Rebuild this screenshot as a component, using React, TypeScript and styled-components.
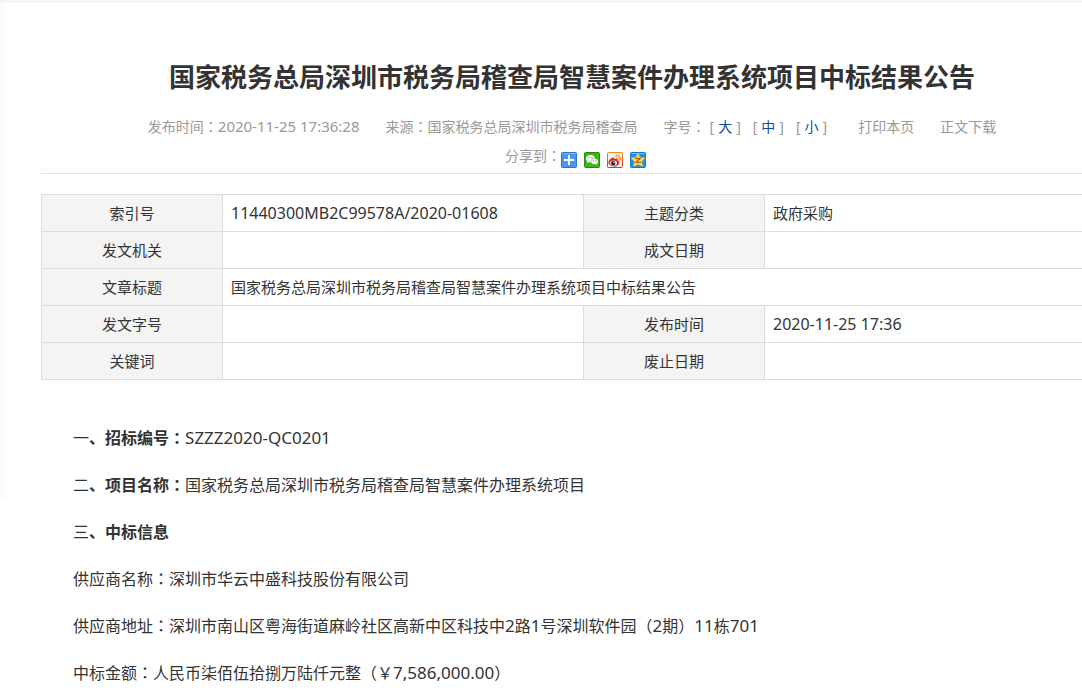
import React from "react";
import styled, { createGlobalStyle } from "styled-components";

const GlobalStyle = createGlobalStyle`
  * { box-sizing: border-box; }
  body {
    margin: 0;
    background: #fff;
    color: #333;
    font-family: "Noto Sans", "Noto Sans CJK SC", sans-serif;
    overflow-x: hidden;
  }
`;

const Page = styled.div`
  min-height: 100vh;
  overflow: hidden;
  border-top: 3px solid #f5f5f5;
  background: linear-gradient(to right, #f9f9f9, #fff) no-repeat left top / 7px 496px;
`;

const Main = styled.main`
  margin: 0 -21px 0 41px;
  padding-top: 54px;
`;

const Title = styled.h1`
  margin: 0;
  color: #333;
  font-size: 26px;
  line-height: 40px;
  font-weight: 700;
  text-align: center;
  white-space: nowrap;
`;

const Header = styled.header`
  border-bottom: 1px solid #e2e2e2;
  color: #999;
  font-size: 14px;
`;

const MetaRow = styled.div`
  display: flex;
  justify-content: center;
  gap: 26px;
  margin-top: 16px;
  line-height: 28px;
  white-space: nowrap;
`;

const SizeGroup = styled.span`
  display: flex;
  gap: 12px;
  margin-right: 5px;
`;

const SizeLabel = styled.span`
  margin-right: -8px;
`;

const SizeOption = styled.span`
  display: flex;
  gap: 4px;
`;

const PlainButton = styled.button<{ $accent?: boolean }>`
  padding: 0;
  border: 0;
  background: none;
  font: inherit;
  color: ${(p) => (p.$accent ? "#0b4da2" : "inherit")};
  cursor: pointer;
`;

const ShareRow = styled.div`
  display: flex;
  justify-content: center;
  align-items: center;
  gap: 7px;
  height: 32px;
  padding: 6px 0 0 7px;
`;

const ShareLabel = styled.span`
  margin-right: -7px;
  padding-bottom: 10px;
`;

const ShareLink = styled.a`
  display: block;
  width: 16px;
  height: 16px;

  svg { display: block; }
`;

/* Full-width punctuation centred in its cell */
const Punctuation = styled.span`
  font-family: "Noto Sans CJK TC", sans-serif;
  line-height: 0;
`;

/* Latin letters and digits are set slightly larger than the Chinese text */
const Latin = styled.span`
  font-size: calc(1em + 1px);
  line-height: 0;
`;

const InfoTable = styled.table`
  width: 100%;
  margin-top: 20px;
  border-collapse: collapse;
  table-layout: fixed;
  font-size: 15px;
  line-height: 20px;
`;

const LabelCol = styled.col`
  width: 181px;
`;

const ValueCol = styled.col`
  width: 361px;
`;

const LabelCell = styled.th`
  height: 37px;
  padding: 0 8px;
  border: 1px solid #dcdcdc;
  background: #f4f4f4;
  font-weight: 400;
  text-align: center;
`;

const ValueCell = styled.td`
  height: 37px;
  padding: 0 8px;
  border: 1px solid #dcdcdc;
`;

const Article = styled.article`
  padding: 42px 32px 0;
  font-size: 16px;
`;

const Paragraph = styled.p`
  margin: 0 0 15px;
  line-height: 32px;
`;

const Numeral = styled.span`
  font-weight: 400;
`;

/* Splits a mixed string so that each script gets its own styling */
const Mixed = ({ text }: { text: string }) => (
  <>
    {text.split(/([：（）]|[!-~][ -~]*)/).map((part, i) => {
      if (/^[：（）]$/.test(part)) {
        return <Punctuation key={i} lang="zh-TW">{part}</Punctuation>;
      }
      return /^[!-~]/.test(part) ? <Latin key={i}>{part}</Latin> : part;
    })}
  </>
);

const PlusIcon = () => (
  <svg width="16" height="16" viewBox="0 0 16 16" aria-hidden="true">
    <rect x=".5" y=".5" width="15" height="15" rx="1" fill="#4c98ee" stroke="#2c73cc" />
    <path d="M1.5 1.5h13" stroke="#7ab5f5" />
    <path d="M8 3v10M3 8h10" stroke="#fff" strokeWidth="2" />
  </svg>
);

const WechatIcon = () => (
  <svg width="16" height="16" viewBox="0 0 16 16" aria-hidden="true">
    <rect x=".5" y=".5" width="15" height="15" rx="1" fill="#3eb51d" stroke="#23870f" />
    <path d="M6.5 3C4 3 2 4.6 2 6.6c0 1.1.6 2 1.6 2.7L3.2 11l1.9-1c.5.1 1 .2 1.6.2C9.2 10 11 8.5 11 6.5S9 3 6.5 3z" fill="#fff" />
    <path d="M10.6 6.5c-2.1 0-3.7 1.3-3.7 3s1.6 3 3.7 3c.4 0 .9-.1 1.3-.2l1.5.9-.4-1.5c.8-.6 1.3-1.3 1.3-2.2 0-1.7-1.7-3-3.7-3z" fill="#fff" stroke="#3eb51d" strokeWidth=".6" />
    <g fill="#2c9412">
      <circle cx="5" cy="5.6" r=".7" /><circle cx="8" cy="5.6" r=".7" />
      <circle cx="9.5" cy="8.8" r=".6" /><circle cx="12" cy="8.8" r=".6" />
    </g>
  </svg>
);

const WeiboIcon = () => (
  <svg width="16" height="16" viewBox="0 0 16 16" aria-hidden="true">
    <defs>
      <linearGradient id="weiboEdge" x1="0" y1="0" x2="0" y2="1">
        <stop offset="0" stopColor="#f58a1f" /><stop offset="1" stopColor="#e02a20" />
      </linearGradient>
    </defs>
    <rect x=".5" y=".5" width="15" height="15" rx="1" fill="#f6f0ee" stroke="url(#weiboEdge)" />
    <path d="M8.500 3.600c3.200-.8 5.400 1.200 4.600 4.800M8.800 6c1.500-.3 2.300.5 2 1.900" fill="none" stroke="#f5a12c" strokeWidth="1.600" />
    <path d="M1.500 10.500C1.500 8 4.500 5.300 6.700 5.700c1 .2 1 .9.800 1.600 1.600-.5 3.200-.2 3 1.300 1.300.3 2 1 1.800 2.300-.4 2.100-2.700 3.500-5.500 3.500s-5.300-1.700-5.300-3.900z" fill="#dd1f1d" />
    <ellipse cx="6.500" cy="11" rx="3.600" ry="2.500" fill="#fff" />
    <circle cx="6.200" cy="11.200" r="2.100" fill="#111" />
    <circle cx="6.900" cy="10.500" r=".7" fill="#fff" />
  </svg>
);

const QzoneIcon = () => (
  <svg width="16" height="16" viewBox="0 0 16 16" aria-hidden="true">
    <rect x=".5" y=".5" width="15" height="15" rx="1" fill="#1e93ea" stroke="#1277cc" />
    <path d="M1.500 1.500h13" stroke="#6cc0f7" />
    <path d="M8 1l2.100 4.400 5 .7-3.600 3.400 1 5L8 12.200l-4.500 2.300 1-5L.900 6.100l5-.7z" fill="#fddd4a" stroke="#f8c530" strokeWidth=".5" />
    <path d="M5.200 6.500h5L6 10.400h5" fill="none" stroke="#b8621a" strokeWidth="1.300" />
  </svg>
);

const shareTargets = [
  { name: "更多分享", Icon: PlusIcon },
  { name: "微信", Icon: WechatIcon },
  { name: "新浪微博", Icon: WeiboIcon },
  { name: "QQ空间", Icon: QzoneIcon },
];

const projectNotice = "国家税务总局深圳市税务局稽查局智慧案件办理系统项目中标结果公告";

const rows: [string, string, string?, string?][] = [
  ["索引号", "11440300MB2C99578A/2020-01608", "主题分类", "政府采购"],
  ["发文机关", "", "成文日期", ""],
  ["文章标题", projectNotice],
  ["发文字号", "", "发布时间", "2020-11-25 17:36"],
  ["关键词", "", "废止日期", ""],
];

const sections = [
  ["一", "、招标编号：", "SZZZ2020-QC0201"],
  ["二", "、项目名称：", "国家税务总局深圳市税务局稽查局智慧案件办理系统项目"],
  ["三", "、中标信息", ""],
];

const details = [
  "供应商名称：深圳市华云中盛科技股份有限公司",
  "供应商地址：深圳市南山区粤海街道麻岭社区高新中区科技中2路1号深圳软件园（2期）11栋701",
  "中标金额：人民币柒佰伍拾捌万陆仟元整（￥7,586,000.00）",
];

export default function App() {
  return (
    <>
      <GlobalStyle />
      <Page lang="zh-CN">
        <Main>
          <Header>
            <Title>{projectNotice}</Title>
            <MetaRow>
              <span><Mixed text="发布时间：2020-11-25 17:36:28" /></span>
              <span><Mixed text="来源：国家税务总局深圳市税务局稽查局" /></span>
              <SizeGroup>
                <SizeLabel><Mixed text="字号：" /></SizeLabel>
                {["大", "中", "小"].map((size) => (
                  <SizeOption key={size}>
                    <span>[</span>
                    <PlainButton $accent>{size}</PlainButton>
                    <span>]</span>
                  </SizeOption>
                ))}
              </SizeGroup>
              <PlainButton>打印本页</PlainButton>
              <PlainButton>正文下载</PlainButton>
            </MetaRow>
            <ShareRow>
              <ShareLabel><Mixed text="分享到：" /></ShareLabel>
              {shareTargets.map(({ name, Icon }) => (
                <ShareLink key={name} href="#" aria-label={name}><Icon /></ShareLink>
              ))}
            </ShareRow>
          </Header>
          <InfoTable>
            <colgroup><LabelCol /><ValueCol /><LabelCol /><col /></colgroup>
            <tbody>
              {rows.map(([label, value, label2, value2]) => (
                <tr key={label}>
                  <LabelCell scope="row">{label}</LabelCell>
                  <ValueCell colSpan={label2 ? 1 : 3}><Mixed text={value} /></ValueCell>
                  {label2 && <LabelCell scope="row">{label2}</LabelCell>}
                  {label2 && <ValueCell><Mixed text={value2 ?? ""} /></ValueCell>}
                </tr>
              ))}
            </tbody>
          </InfoTable>
          <Article>
            {sections.map(([numeral, heading, text]) => (
              <Paragraph key={numeral}>
                <strong><Numeral>{numeral}</Numeral><Mixed text={heading} /></strong>
                <Mixed text={text} />
              </Paragraph>
            ))}
            {details.map((text) => (
              <Paragraph key={text}><Mixed text={text} /></Paragraph>
            ))}
          </Article>
        </Main>
      </Page>
    </>
  );
}
